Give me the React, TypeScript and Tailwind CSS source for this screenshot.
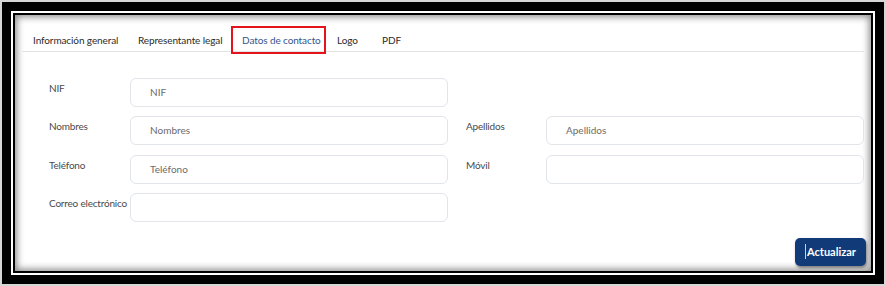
const tabs = [
  { label: "Información general", w: "w-[105px]" },
  { label: "Representante legal", w: "w-[104px]" },
  { label: "Datos de contacto", w: "w-[95px]" },
  { label: "Logo", w: "w-[45px]" },
  { label: "PDF", w: "w-[45px]" },
];

function Label({ children, right }: { children: React.ReactNode; right?: boolean }) {
  return (
    <div className={"pt-[3px] text-[10px] leading-[14px] tracking-[-0.2px] text-[#4a4a4a] whitespace-nowrap " + (right ? "pl-[18px]" : "")}>
      {children}
    </div>
  );
}

function Input({ placeholder }: { placeholder?: string }) {
  return (
    <div className="h-[29px] rounded-[6px] border border-[#e1e5ea] bg-white pl-[19px] flex items-center text-[10px] text-[#6b6b6b]">
      {placeholder}
    </div>
  );
}

export default function App() {
  return (
    <div className="w-[886px] h-[286px] bg-[#d6d6d6] p-[2px]" style={{ fontFamily: "Lato, 'Noto Sans', sans-serif" }}>
      <div className="h-full bg-black p-[9px]">
        <div className="h-full border-2 border-white">
          <div className="h-full border-2 border-black">
            <div className="h-full bg-white shadow-[inset_0_0_7px_2px_rgba(0,0,0,0.45)] px-[7px] pt-[11px] flex flex-col">
              {/* tabs */}
              <div className="flex border-b border-[#e3e3e3] h-[26px] items-stretch">
                {tabs.map((t, i) => (
                  <div
                    key={t.label}
                    className={
                      t.w +
                      " shrink-0 pl-[9px] h-[28px] flex items-center whitespace-nowrap text-[10px] tracking-[-0.1px] border-2 " +
                      (i === 2 ? "border-[#e3141b] text-[#34558b]" : "border-transparent text-[#2b2b2b]")
                    }
                  >
                    {t.label}
                  </div>
                ))}
              </div>

              {/* form */}
              <div className="mt-[26px] pl-[27px] grid grid-cols-[81px_318px_98px_318px] gap-y-[9.3px]">
                <Label>NIF</Label>
                <Input placeholder="NIF" />
                <div />
                <div />

                <Label>Nombres</Label>
                <Input placeholder="Nombres" />
                <Label right>Apellidos</Label>
                <Input placeholder="Apellidos" />

                <Label>Teléfono</Label>
                <Input placeholder="Teléfono" />
                <Label right>Móvil</Label>
                <Input />

                <Label>Correo electrónico</Label>
                <Input />
                <div />
                <div />
              </div>

              {/* button */}
              <div className="mt-[16px] flex justify-end -mr-[2px]">
                <button className="w-[71px] h-[28px] rounded-[5px] bg-[#113b78] text-white text-[11px] font-bold shadow-[1px_2px_3px_rgba(0,0,0,0.45)] flex items-center justify-center">
                  <span className="w-px h-[15px] bg-[#c8d0dc] mr-[1px]" />
                  Actualizar
                </button>
              </div>
            </div>
          </div>
        </div>
      </div>
    </div>
  );
}
